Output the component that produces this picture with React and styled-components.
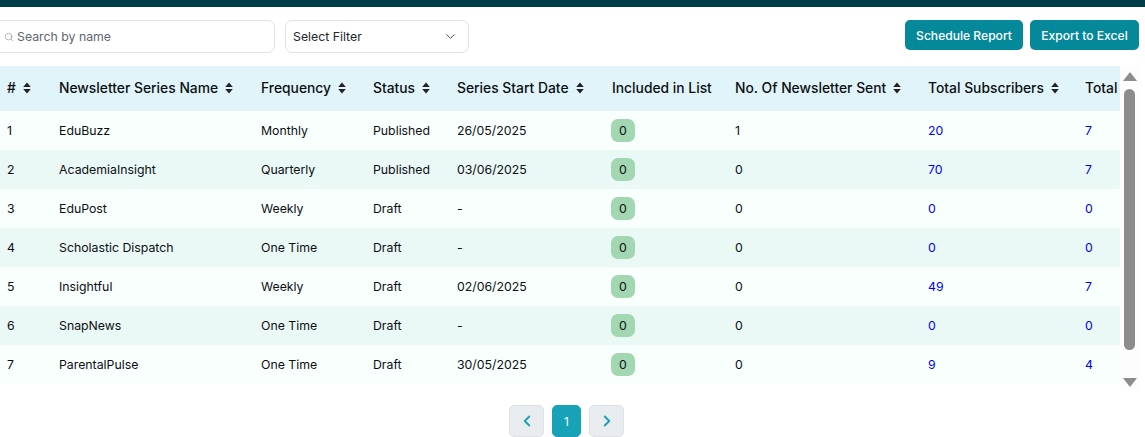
import styled, { createGlobalStyle } from "styled-components";
import { Search, ChevronDown, ChevronLeft, ChevronRight } from "lucide-react";

const GlobalStyle = createGlobalStyle`
  html, body {
    margin: 0;
    padding: 0;
    height: 100%;
    overflow: hidden;
    background: #fff;
    font-family: Inter, "Liberation Sans", sans-serif;
  }
`;

const Page = styled.div`
  width: 1145px;
  height: 437px;
  overflow: hidden;
`;

const TopBar = styled.div`
  height: 7px;
  background: #003c48;
`;

const Toolbar = styled.div`
  display: flex;
  align-items: flex-start;
  padding: 13px 6px 0 0;
  height: 46px;
`;

const SearchBox = styled.div`
  display: flex;
  align-items: center;
  gap: 3px;
  width: 284px;
  height: 33px;
  margin-left: -9px;
  padding-left: 12px;
  box-sizing: border-box;
  background: #fff;
  border: 1px solid #dfe1e8;
  border-radius: 7px;
  color: #8a8f98;
`;

const SearchText = styled.span`
  font-size: 12.3px;
  color: #5f6672;
`;

const SelectBox = styled.div`
  display: flex;
  align-items: center;
  justify-content: space-between;
  width: 184px;
  height: 33px;
  margin-left: 10px;
  padding: 0 10px 0 7px;
  box-sizing: border-box;
  border: 1px solid #dfe1e8;
  border-radius: 7px;
  font-size: 12.3px;
  color: #22262c;
`;

const Actions = styled.div`
  display: flex;
  gap: 7px;
  margin-left: auto;
`;

const ActionButton = styled.button`
  width: ${(p) => p.$w}px;
  height: 30px;
  padding: 0;
  border: none;
  border-radius: 5px;
  background: #05889a;
  color: #fff;
  font-family: inherit;
  font-size: 12.1px;
  font-weight: 500;
`;

const TableArea = styled.div`
  display: flex;
  width: 1139px;
  height: 325px;
`;

const TableClip = styled.div`
  width: 1120px;
  overflow: hidden;
`;

const Table = styled.table`
  width: 1240px;
  table-layout: fixed;
  border-collapse: collapse;
`;

const HeadRow = styled.tr`
  height: 45px;
  background: #e0f4f9;
`;

const HeadCell = styled.th`
  padding: 0 0 2px 7px;
  text-align: left;
  font-size: 13.85px;
  font-weight: 450;
  color: #0c0f12;
  white-space: nowrap;
`;

const SortIcon = styled.svg`
  width: 8px;
  height: 12px;
  margin-left: 7px;
  vertical-align: -1px;
`;

const Row = styled.tr`
  height: 39px;
  background: ${(p) => (p.$even ? "#eaf8f6" : "#f8fffd")};
`;

const Cell = styled.td`
  padding: 0 0 0 7px;
  font-size: 12.3px;
  color: ${(p) => (p.$link ? "#0000ff" : "#0c0f12")};
  white-space: nowrap;
`;

const Badge = styled.span`
  display: inline-flex;
  align-items: center;
  justify-content: center;
  width: 24px;
  height: 23px;
  margin-left: -1px;
  border-radius: 7px;
  background: #a3d7b1;
  font-weight: 400;
`;

const Scrollbar = styled.div`
  display: flex;
  flex-direction: column;
  align-items: center;
  width: 19px;
  background: #fdfdfd;
  padding-top: 6px;
  box-sizing: border-box;
`;

const ScrollArrow = styled.svg`
  width: 14px;
  height: 9px;
  flex: none;
`;

const ScrollThumb = styled.div`
  width: 11px;
  height: 261px;
  margin: 8px 0 28px;
  border-radius: 6px;
  background: #8c8c8c;
`;

const Pagination = styled.div`
  display: flex;
  justify-content: center;
  gap: 8px;
  width: 1133px;
  margin-top: 14px;
`;

const PageButton = styled.button`
  display: flex;
  align-items: center;
  justify-content: center;
  width: ${(p) => (p.$active ? 29 : 35)}px;
  height: 32px;
  padding: 0;
  border: 1px solid ${(p) => (p.$active ? "#17a2b8" : "#dee2e6")};
  border-radius: 5px;
  background: ${(p) => (p.$active ? "#17a2b8" : "#e9ecef")};
  color: ${(p) => (p.$active ? "#fff" : "#17a2b8")};
  font-family: inherit;
  font-size: 12px;
  font-weight: 400;
`;

const columns = [
  { label: "#", width: 52 },
  { label: "Newsletter Series Name", width: 202 },
  { label: "Frequency", width: 112 },
  { label: "Status", width: 84 },
  { label: "Series Start Date", width: 155 },
  { label: "Included in List", width: 123, noSort: true },
  { label: "No. Of Newsletter Sent", width: 193 },
  { label: "Total Subscribers", width: 157 },
  { label: "Total", width: 162, noSort: true },
];

const rows = [
  [1, "EduBuzz", "Monthly", "Published", "26/05/2025", 1, 20, 7],
  [2, "AcademiaInsight", "Quarterly", "Published", "03/06/2025", 0, 70, 7],
  [3, "EduPost", "Weekly", "Draft", "-", 0, 0, 0],
  [4, "Scholastic Dispatch", "One Time", "Draft", "-", 0, 0, 0],
  [5, "Insightful", "Weekly", "Draft", "02/06/2025", 0, 49, 7],
  [6, "SnapNews", "One Time", "Draft", "-", 0, 0, 0],
  [7, "ParentalPulse", "One Time", "Draft", "30/05/2025", 0, 9, 4],
];

function Sort() {
  return (
    <SortIcon viewBox="0 0 8 12">
      <path d="M4 0.5 L7.8 5 H0.2 Z M4 11.5 L7.8 7 H0.2 Z" fill="#222" />
    </SortIcon>
  );
}

export default function App() {
  return (
    <Page>
      <GlobalStyle />
      <TopBar />
      <Toolbar>
        <SearchBox>
          <Search size={10} strokeWidth={1.5} />
          <SearchText>Search by name</SearchText>
        </SearchBox>
        <SelectBox>
          Select Filter
          <ChevronDown size={15} strokeWidth={1.5} color="#444" />
        </SelectBox>
        <Actions>
          <ActionButton $w={118}>Schedule Report</ActionButton>
          <ActionButton $w={109}>Export to Excel</ActionButton>
        </Actions>
      </Toolbar>
      <TableArea>
        <TableClip>
          <Table>
            <colgroup>
              {columns.map((c) => (
                <col key={c.label} width={c.width} />
              ))}
            </colgroup>
            <thead>
              <HeadRow>
                {columns.map((c) => (
                  <HeadCell key={c.label}>
                    {c.label}
                    {!c.noSort && <Sort />}
                  </HeadCell>
                ))}
              </HeadRow>
            </thead>
            <tbody>
              {rows.map((r, i) => (
                <Row key={r[0]} $even={i % 2 === 1}>
                  <Cell>{r[0]}</Cell>
                  <Cell>{r[1]}</Cell>
                  <Cell>{r[2]}</Cell>
                  <Cell>{r[3]}</Cell>
                  <Cell>{r[4]}</Cell>
                  <Cell>
                    <Badge>0</Badge>
                  </Cell>
                  <Cell>{r[5]}</Cell>
                  <Cell $link>{r[6]}</Cell>
                  <Cell $link>{r[7]}</Cell>
                </Row>
              ))}
            </tbody>
          </Table>
        </TableClip>
        <Scrollbar>
          <ScrollArrow viewBox="0 0 14 9">
            <path d="M7 0 L14 9 H0 Z" fill="#8c8c8c" />
          </ScrollArrow>
          <ScrollThumb />
          <ScrollArrow viewBox="0 0 14 9">
            <path d="M0 0 H14 L7 9 Z" fill="#8c8c8c" />
          </ScrollArrow>
        </Scrollbar>
      </TableArea>
      <Pagination>
        <PageButton>
          <ChevronLeft size={18} strokeWidth={2.5} />
        </PageButton>
        <PageButton $active>1</PageButton>
        <PageButton>
          <ChevronRight size={18} strokeWidth={2.5} />
        </PageButton>
      </Pagination>
    </Page>
  );
}
